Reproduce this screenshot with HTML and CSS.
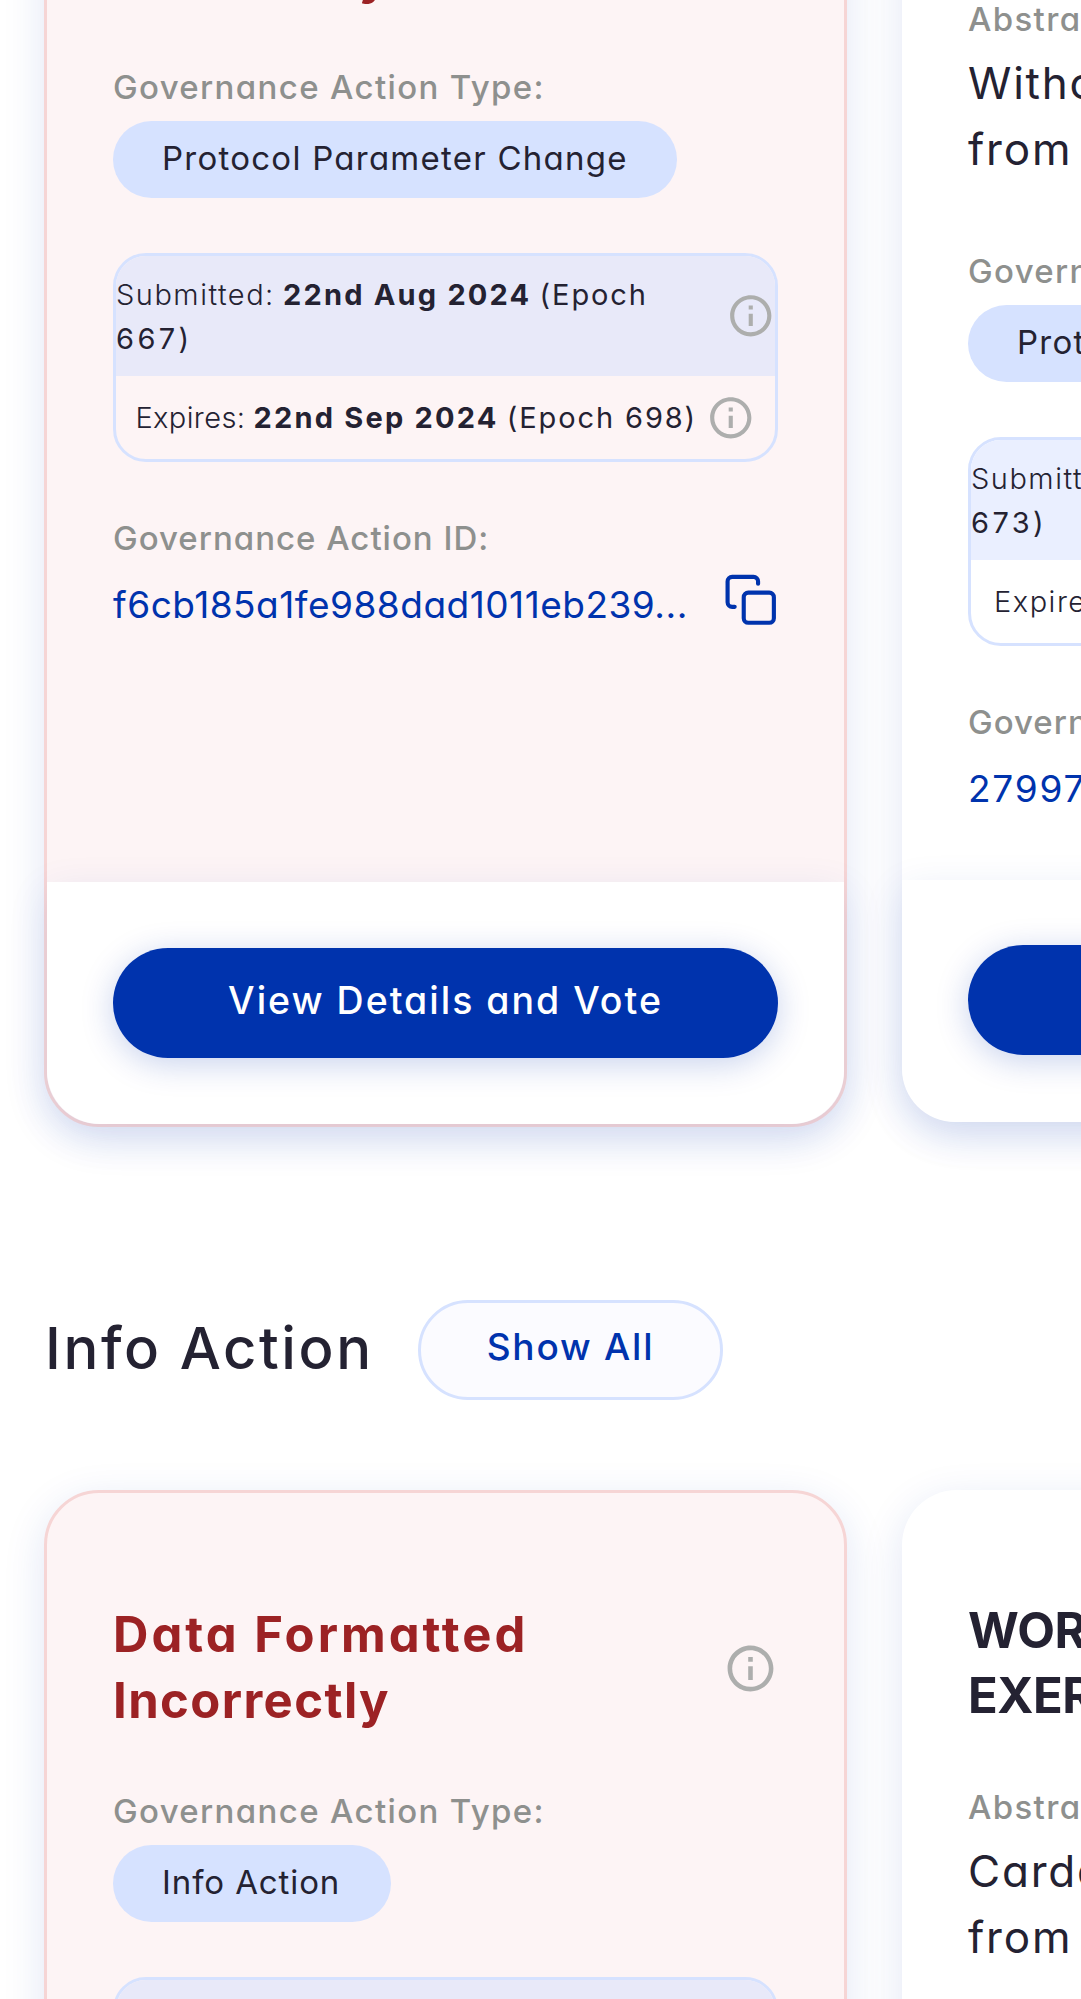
FILE: index.html
```html
<!DOCTYPE html>
<html lang="en">
<head>
<meta charset="utf-8">
<title>Governance Actions</title>
<link rel="stylesheet" href="styles.css">
</head>
<body>
<svg class="sprite" aria-hidden="true">
  <symbol id="info" viewBox="0 0 24 24"><path d="M11 7h2v2h-2zm0 4h2v6h-2zm1-9C6.48 2 2 6.48 2 12s4.480 10 10 10 10-4.480 10-10S17.520 2 12 2zm0 18c-4.410 0-8-3.590-8-8s3.590-8 8-8 8 3.590 8 8-3.590 8-8 8z"/></symbol>
  <symbol id="copy" viewBox="0 0 24 24"><path d="M5.100 15.200H4A2 2 0 0 1 2 13.200V4.100A2 2 0 0 1 4 2.100H13.300A2 2 0 0 1 15.300 4.100V5.100"/><rect x="9.050" y="9" width="13.150" height="13.150" rx="2"/></symbol>
</svg>
<main class="page">
  <section class="row">
    <article class="card card-error">
      <div class="card-body">
        <div class="title-row">
          <h3 class="title"><span class="t-data">Data Formatted</span><br><span class="t-inc">Incorrectly</span></h3>
          <svg class="icon icon-lg"><use href="#info"/></svg>
        </div>
        <p class="label label-type">Governance Action Type:</p>
        <span class="pill pill-wide">Protocol Parameter Change</span>
        <div class="dates">
          <div class="submitted">
            <p class="date"><span class="light">Submitted:</span> <b>22nd Aug 2024</b> <span class="epoch">(Epoch</span><br><span class="num">667)</span></p>
            <svg class="icon"><use href="#info"/></svg>
          </div>
          <div class="expires">
            <p class="date"><span class="light light-tight">Expires:</span> <b>22nd Sep 2024</b> <span class="epoch">(Epoch 698)</span></p>
            <svg class="icon"><use href="#info"/></svg>
          </div>
        </div>
        <p class="label label-id">Governance Action ID:</p>
        <div class="id-row"><span class="hash">f6cb185a1fe988dad1011eb239...</span><svg class="copy"><use href="#copy"/></svg></div>
      </div>
      <div class="card-footer"><button class="vote">View Details and Vote</button></div>
    </article>
    <article class="card card-plain">
      <div class="card-body card-body-short">
        <p class="label label-abstract">Abstract:</p>
        <p class="abstract">Without<br>from</p>
        <p class="label label-after">Governance Action Type:</p>
        <span class="pill pill-wide">Protocol Parameter Change</span>
        <div class="dates">
          <div class="submitted">
            <p class="date"><span class="light">Submitted:</span><br><span class="num">673)</span></p>
          </div>
          <div class="expires expires-start">
            <p class="date"><span class="light">Expires:</span></p>
          </div>
        </div>
        <p class="label label-id">Governance Action ID:</p>
        <div class="id-row"><span class="hash hash-wide">27997</span></div>
      </div>
      <div class="card-footer"><button class="vote"></button></div>
    </article>
  </section>

  <header class="section-head">
    <h2 class="section-title">Info Action</h2>
    <button class="show-all">Show All</button>
  </header>

  <section class="row">
    <article class="card card-error">
      <div class="card-body">
        <div class="title-row">
          <h3 class="title"><span class="t-data">Data Formatted</span><br><span class="t-inc">Incorrectly</span></h3>
          <svg class="icon icon-lg"><use href="#info"/></svg>
        </div>
        <p class="label label-type">Governance Action Type:</p>
        <span class="pill pill-info">Info Action</span>
        <div class="dates"><div class="submitted"></div></div>
      </div>
    </article>
    <article class="card card-plain">
      <div class="card-body card-body-dark">
        <h3 class="title title-dark">WORKSHOP<br>EXERCISE</h3>
        <p class="label label-abstract-2">Abstract:</p>
        <p class="abstract">Cardano<br>from</p>
      </div>
    </article>
  </section>
</main>
</body>
</html>
```

FILE: styles.css
```css
* { box-sizing: border-box; }
html { height: 1999px; overflow: hidden; }
body {
  margin: 0;
  height: 1999px;
  overflow: hidden;
  background: #fff;
  color: #242232;
  font-family: "Inter", "Open Sans", sans-serif;
  font-feature-settings: "cv11", "calt" 0;
}
h2, h3, p { margin: 0; }
button { font: inherit; font-feature-settings: inherit; }
.sprite { display: none; }
.page { margin-top: -234px; }

.row { display: flex; align-items: flex-start; gap: 55px; padding-left: 44px; }
.card {
  flex: none;
  display: flex;
  flex-direction: column;
  width: 803px;
  height: 1361px;
  border-radius: 55px;
  box-shadow: 0 11px 41px rgba(20, 60, 180, 0.13);
}
.card-error { background: #fdf4f5; border: 3px solid #f6d5d5; }
.card-plain { background: #fff; height: 1356px; }
.card-body { flex: 1; padding: 109px 66px 0; }
.card-body-short { padding-top: 231px; }
.card-body-dark { padding-top: 108px; }

.title-row { display: flex; align-items: center; justify-content: space-between; height: 132px; }
.title { font-size: 49px; line-height: 66px; font-weight: 650; color: #9c2224; white-space: nowrap; }
.title-dark { color: #242232; line-height: 65px; letter-spacing: -0.5px; }
.t-data { letter-spacing: 3px; }
.t-inc { letter-spacing: 1.4px; }

.icon { flex: none; width: 49.5px; height: 49.5px; fill: #adaead; }
.icon-lg { width: 55px; height: 55px; }

.label { font-size: 33px; line-height: 44px; font-weight: 500; color: #8e908e; white-space: nowrap; letter-spacing: 1.35px; }
.label-type { margin-top: 55px; }
.label-after { margin-top: 67px; }
.label-id { margin-top: 54px; letter-spacing: 1px; }
.label-abstract-2 { margin-top: 57px; }
.abstract { margin-top: 9px; font-size: 44px; line-height: 66px; letter-spacing: 1.8px; white-space: nowrap; }

.pill {
  display: block;
  width: 564px;
  height: 77px;
  margin-top: 12px;
  padding-left: 49px;
  border-radius: 39px;
  background: #d6e2ff;
  font-size: 33px;
  line-height: 75px;
  letter-spacing: 1.25px;
  white-space: nowrap;
}
.pill-info { width: 278px; letter-spacing: 0.9px; }

.dates { margin-top: 55px; height: 209px; border: 3px solid #d6e2ff; border-radius: 33px; overflow: hidden; }
.submitted { display: flex; align-items: center; justify-content: space-between; height: 120px; background: #e8e9f9; }
.card-plain .submitted { background: #eaefff; }
.expires { display: flex; align-items: center; justify-content: center; gap: 9px; height: 83px; }
.expires-start { justify-content: flex-start; padding-left: 23px; }
.date { font-size: 29px; line-height: 44px; padding-top: 1px; white-space: nowrap; }
.light { font-weight: 300; letter-spacing: 1.5px; }
.light-tight { letter-spacing: 0.4px; }
.date b { font-weight: 650; letter-spacing: 2.2px; }
.epoch { letter-spacing: 1.9px; }
.num { letter-spacing: 3.4px; }

.id-row { display: flex; justify-content: space-between; margin-top: 16px; height: 58px; line-height: 58px; font-size: 37px; color: #0033ad; white-space: nowrap; }
.hash { letter-spacing: 0.5px; }
.hash-wide { letter-spacing: 1.8px; }
.copy { width: 55px; height: 55px; margin: -4px 0 0; fill: none; stroke: #0033ad; stroke-width: 1.8; stroke-linecap: round; }

.card-footer {
  height: 242px;
  padding: 65px 66px 0;
  background: #fff;
  border-radius: 0 0 53px 53px;
  box-shadow: 0 11px 41px rgba(20, 60, 180, 0.11);
}
.card-error .card-footer { padding-top: 66px; }
.vote {
  display: block;
  width: 100%;
  height: 110px;
  padding: 0 0 5px;
  border: 0;
  border-radius: 55px;
  background: #0033ad;
  color: #fff;
  font-size: 37.5px;
  font-weight: 500;
  letter-spacing: 2px;
  box-shadow: 0 6px 33px rgba(0, 51, 173, 0.22);
}

.section-head { display: flex; align-items: center; gap: 48px; padding: 173px 0 90px 44px; }
.section-title { width: 326px; padding: 0 0 5px 1px; font-size: 58px; line-height: 94px; font-weight: 500; letter-spacing: 2.6px; white-space: nowrap; }
.show-all {
  width: 305px;
  height: 100px;
  padding: 0 0 7px;
  border: 3px solid #d6e2ff;
  border-radius: 50px;
  background: #fbfbff;
  color: #0033ad;
  font-size: 37px;
  font-weight: 500;
  letter-spacing: 1.8px;
}
```
